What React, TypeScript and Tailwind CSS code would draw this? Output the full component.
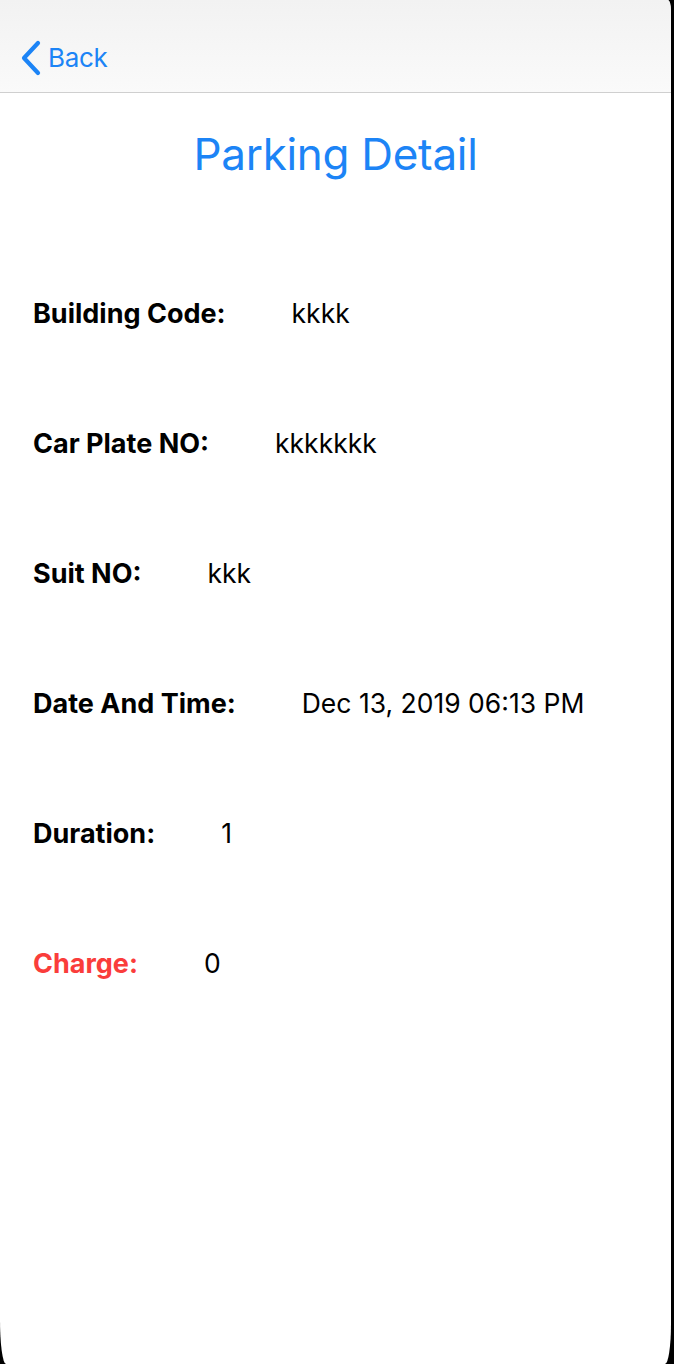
import React from "react";

const rows = [
  { label: "Building Code:", value: "kkkk" },
  { label: "Car Plate NO:", value: "kkkkkkk" },
  { label: "Suit NO:", value: "kkk" },
  { label: "Date And Time:", value: "Dec 13, 2019 06:13 PM" },
  { label: "Duration:", value: "1" },
  { label: "Charge:", value: "0", red: true },
];

export default function App() {
  return (
    <div className="w-[674px] h-[1364px] bg-black font-['Inter',sans-serif] overflow-hidden">
      <div className="w-[671px] h-[1364px] bg-white rounded-tr-[3px_12px] rounded-bl-[6px_44px] rounded-br-[6px_40px] overflow-hidden flex flex-col">
        <header className="h-[93px] shrink-0 bg-gradient-to-b from-[#f2f2f2] to-[#fafafa] border-b border-[#cfcfcf] flex items-end pb-[16px] pl-[20px]">
          <button className="flex items-center gap-[6px] text-[#1c84f6]">
            <svg width="22" height="36" viewBox="0 0 22 36" fill="none">
              <path d="M18 3 L4 18 L18 33" stroke="currentColor" strokeWidth="4.2" strokeLinecap="round" strokeLinejoin="round" />
            </svg>
            <span className="text-[26px] leading-none tracking-[-0.3px]">Back</span>
          </button>
        </header>

        <h1 className="mt-[35px] text-center text-[44px] leading-[52px] text-[#1c84f6] tracking-[-0.3px]">
          Parking Detail
        </h1>

        <div className="mt-[69px] flex flex-col pl-[33px]">
          {rows.map((row, i) => (
            <div key={i} className="h-[130px] flex items-center">
              <span className={"text-[27px] font-bold " + (row.red ? "text-[#fa3d3b]" : "text-black")}>
                {row.label}
              </span>
              <span className="ml-[66px] text-[26.5px] text-black">{row.value}</span>
            </div>
          ))}
        </div>
      </div>
    </div>
  );
}
